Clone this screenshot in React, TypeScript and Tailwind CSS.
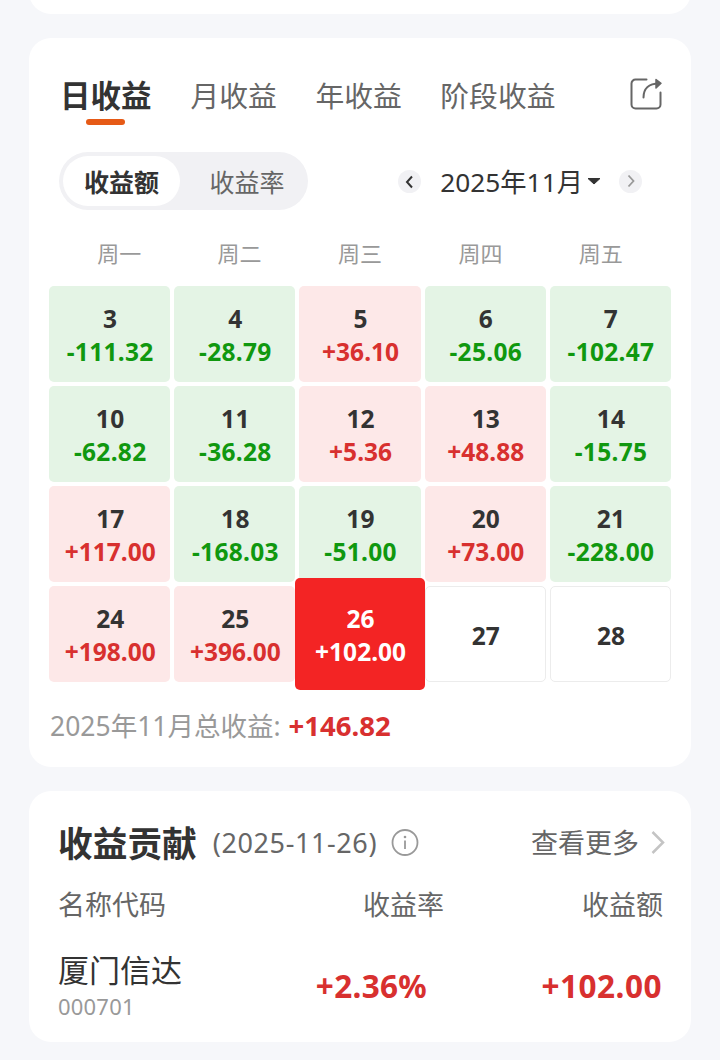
import clsx from "clsx";

type Day = {
  day: number;
  amount?: string;
};

const tabs = ["月收益", "年收益", "阶段收益"];
const weekdays = ["周一", "周二", "周三", "周四", "周五"];

const days: Day[] = [
  { day: 3, amount: "-111.32" },
  { day: 4, amount: "-28.79" },
  { day: 5, amount: "+36.10" },
  { day: 6, amount: "-25.06" },
  { day: 7, amount: "-102.47" },
  { day: 10, amount: "-62.82" },
  { day: 11, amount: "-36.28" },
  { day: 12, amount: "+5.36" },
  { day: 13, amount: "+48.88" },
  { day: 14, amount: "-15.75" },
  { day: 17, amount: "+117.00" },
  { day: 18, amount: "-168.03" },
  { day: 19, amount: "-51.00" },
  { day: 20, amount: "+73.00" },
  { day: 21, amount: "-228.00" },
  { day: 24, amount: "+198.00" },
  { day: 25, amount: "+396.00" },
  { day: 26, amount: "+102.00" },
  { day: 27 },
  { day: 28 },
];

const selectedDay = 26;

function ShareIcon() {
  return (
    <svg width="36" height="36" viewBox="0 0 36 36" fill="none" stroke="#666" strokeWidth="2" strokeLinecap="round" strokeLinejoin="round">
      <path d="M17.500 3.500H6.500a4 4 0 0 0-4 4v21a4 4 0 0 0 4 4h21a4 4 0 0 0 4-4V16.500" />
      <path d="M14.500 21.500C14.500 13 19.500 7.500 30 7.500" />
      <path d="M27 3.500L32 7.300L27 12z" fill="#666" strokeWidth="1.500" />
    </svg>
  );
}

function DayCell({ day, amount }: Day) {
  const selected = day === selectedDay;
  const gain = amount?.startsWith("+");

  return (
    <div
      className={clsx(
        "flex flex-col items-center justify-center rounded-[5px] pl-px pt-[2px] text-[24.5px] leading-[33px] font-bold",
        selected && "z-10 -mx-1 -my-2 bg-[#f32424] text-white",
        !selected && !amount && "border border-[#ececec] text-[#333]",
        !selected && amount && gain && "bg-[#fde8e8] text-[#d8302f]",
        !selected && amount && !gain && "bg-[#e4f4e5] tracking-[0.3px] text-[#10980f]"
      )}
    >
      <span className={selected ? "text-white" : "text-[#333]"}>{day}</span>
      {amount && <span>{amount}</span>}
    </div>
  );
}

function Calendar() {
  return (
    <section className="h-[729px] rounded-[22px] bg-white">
      {/* Tabs */}
      <div className="flex h-[90px] items-start pl-[31px] pr-[26px] pt-[38px] text-[29px] leading-10 text-[#666]">
        <div className="mr-[39px] flex flex-col items-center text-[30.5px] font-bold text-[#333]">
          <span className="-mt-px">日收益</span>
          <span className="mt-1 h-[6px] w-[39px] rounded-full bg-[#e65a16]" />
        </div>
        <div className="flex gap-[38.5px] text-[28.8px]">
          {tabs.map((tab) => (
            <span key={tab}>{tab}</span>
          ))}
        </div>
        <span className="ml-auto">
          <ShareIcon />
        </span>
      </div>

      {/* Mode switch and month picker */}
      <div className="mt-6 flex h-[58px] items-center pl-[30px] pr-[49px]">
        <div className="flex h-[58px] w-[249px] rounded-full bg-[#f1f1f4] p-1 text-[25px] leading-[52px]">
          <span className="h-[50px] w-[117px] rounded-full bg-white text-center font-bold text-[#333]">收益额</span>
          <span className="flex-1 pl-2.5 text-center text-[#666]">收益率</span>
        </div>
        <div className="ml-auto flex items-center">
          <svg width="23" height="23" viewBox="0 0 23 23" fill="none" stroke="#333" strokeWidth="2">
            <circle cx="11.500" cy="11.500" r="11.500" fill="#f1f1f4" stroke="none" />
            <path d="M14 6.500L9 12L14 17.500" />
          </svg>
          <span className="ml-[19px] pt-px text-[26.3px] leading-9 text-[#333]">2025年11月</span>
          <svg className="ml-1" width="14" height="8" viewBox="0 0 14 8" fill="#333">
            <path d="M1 1.500h12L7 7z" stroke="#333" strokeLinejoin="round" />
          </svg>
          <svg className="ml-[18px]" width="23" height="23" viewBox="0 0 23 23" fill="none" stroke="#999" strokeWidth="1.800">
            <circle cx="11.500" cy="11.500" r="11.500" fill="#f1f1f4" stroke="none" />
            <path d="M9.500 5.500L14.500 11L9.500 16.500" />
          </svg>
        </div>
      </div>

      <div className="mt-[27px] grid grid-cols-5 pl-[30px] pr-[30px] text-center text-[22px] leading-8 text-[#999]">
        {weekdays.map((name) => (
          <span key={name}>{name}</span>
        ))}
      </div>

      <div className="ml-[20.1px] mt-[17px] grid w-[622px] auto-rows-[96px] grid-cols-5 gap-1">
        {days.map((item) => (
          <DayCell key={item.day} {...item} />
        ))}
      </div>

      <p className="ml-[21px] mt-[26px] flex items-center text-[26.500px] leading-9 text-[#999]">
        2025年11月总收益:
        <strong className="ml-2 text-[27.500px] font-bold text-[#d8302f]">+146.82</strong>
      </p>
    </section>
  );
}

function Contribution() {
  return (
    <section className="h-[251px] rounded-[22px] bg-white pl-[29px] pr-[28px] pt-7">
      <div className="flex h-12 items-center text-[27px] text-[#666]">
        <h2 className="pt-0.5 text-[34.7px] font-bold text-[#333]">收益贡献</h2>
        <span className="ml-4 pt-px tracking-[0.6px]">(2025-11-26)</span>
        <svg className="ml-[14px] -mt-px" width="28" height="28" viewBox="0 0 28 28" fill="none" stroke="#999" strokeWidth="1.800">
          <circle cx="14" cy="13.500" r="12.500" />
          <path d="M14 11.500v8.500" />
          <circle cx="14" cy="8" r="1.300" fill="#999" stroke="none" />
        </svg>
        <span className="ml-auto">查看更多</span>
        <svg className="-mr-0.5 ml-3" width="14" height="24" viewBox="0 0 14 24" fill="none" stroke="#c4c4c4" strokeWidth="2.500">
          <path d="M1.500 1L12 11.500L1.500 22" />
        </svg>
      </div>

      <div className="mt-[18px] grid grid-cols-[1fr_120px_219px] text-right text-[27px] leading-10 text-[#666]">
        <span className="text-left">名称代码</span>
        <span>收益率</span>
        <span>收益额</span>
      </div>

      <div className="mt-[25px] flex items-center text-[31.5px] font-bold text-[#d8302f]">
        <div className="flex-1 font-normal">
          <div className="text-[31px] leading-10 text-[#333]">厦门信达</div>
          <div className="text-[22px] leading-8 tracking-[0.2px] text-[#999]">000701</div>
        </div>
        <span className="w-[120px] text-right tracking-[0.3px]">+2.36%</span>
        <span className="w-[236px] pr-px text-right tracking-[0.5px]">+102.00</span>
      </div>
    </section>
  );
}

export default function App() {
  return (
    <div className="flex h-[1060px] w-[720px] flex-col gap-6 overflow-hidden bg-[#f6f7fa] px-[29px] font-['Noto_Sans','Noto_Sans_CJK_SC',sans-serif]">
      <div className="h-[14px] shrink-0 overflow-hidden">
        <div className="-mt-10 h-[54px] rounded-[22px] bg-white" />
      </div>
      <Calendar />
      <Contribution />
    </div>
  );
}
